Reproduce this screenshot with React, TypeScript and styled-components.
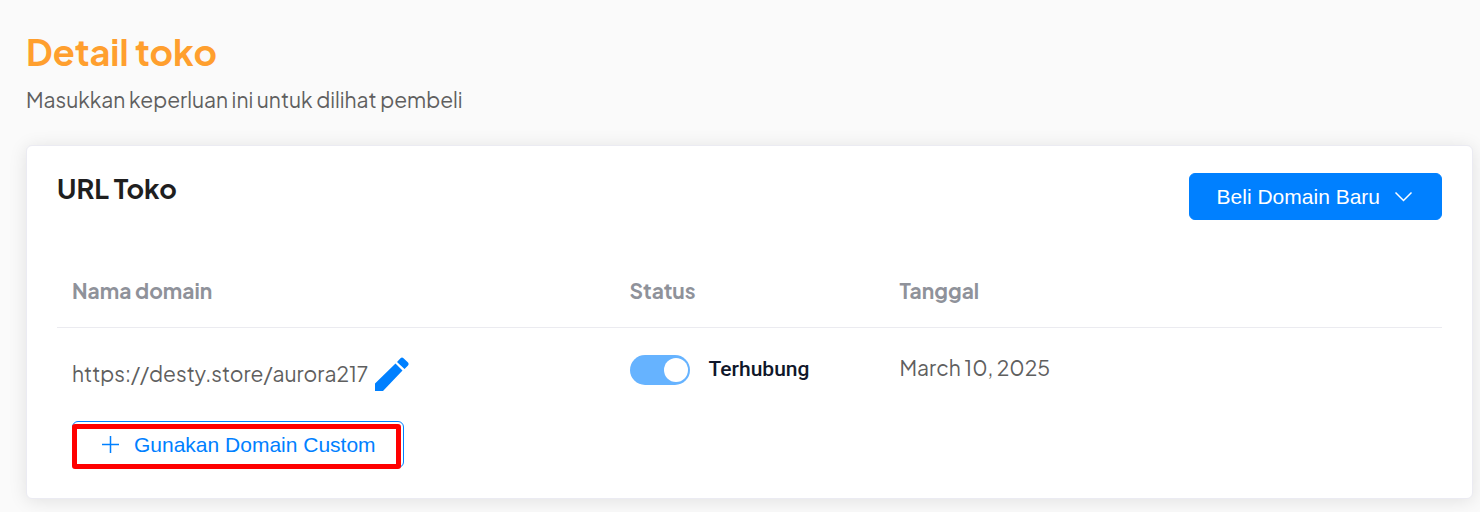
import React from "react";
import styled, { createGlobalStyle } from "styled-components";

const GlobalStyle = createGlobalStyle`
  *, *::before, *::after { box-sizing: border-box; }
  body {
    margin: 0;
    background: #fafafa;
    color: #5f5f5f;
    font-family: "Plus Jakarta Sans", Inter, sans-serif;
    font-size: 21px;
    line-height: 30px;
  }
`;

const Page = styled.main`
  padding: 28px 7px 13px 26px;
`;

const Title = styled.h1`
  margin: 0;
  color: #ff9f2e;
  font-size: 36px;
  font-weight: 700;
  line-height: 48px;
`;

const Subtitle = styled.p`
  margin: 9px 0 30px;
`;

const Card = styled.section`
  padding: 27px 30px 30px;
  background: #fff;
  border: 1px solid #ebebf2;
  border-radius: 6px;
  box-shadow: 0 2px 18px rgba(0, 0, 0, 0.1);
`;

const CardHeader = styled.header`
  display: flex;
  align-items: flex-start;
  justify-content: space-between;
`;

const CardTitle = styled.h2`
  margin: 0;
  color: #1f1f1f;
  font-size: 27px;
  font-weight: 700;
`;

const Button = styled.button<{ $outlined?: boolean }>`
  display: inline-flex;
  align-items: center;
  gap: 14px;
  height: 47px;
  padding: 0 27px;
  border: 1px solid #0080ff;
  border-radius: 6px;
  background: ${(p) => (p.$outlined ? "#fff" : "#0080ff")};
  color: ${(p) => (p.$outlined ? "#0080ff" : "#fff")};
  font: 21px/32px Arial, "Liberation Sans", sans-serif;
  white-space: nowrap;
  cursor: pointer;
`;

const DomainTable = styled.table`
  width: 100%;
  margin-top: 36px;
  table-layout: fixed;
  border-collapse: collapse;
`;

const StatusColumn = styled.col`
  width: 270px;
`;

const HeadCell = styled.th`
  padding: 20px 15px 21px;
  border-bottom: 1px solid #ebebf0;
  color: #8f929a;
  font-weight: 700;
  text-align: left;
`;

const Cell = styled.td`
  padding: 25px 15px 0;
  vertical-align: top;
`;

const DomainLine = styled.div`
  display: flex;
  align-items: center;
  gap: 7px;
  margin: 3px 0 29px;
  height: 36px;
`;

const EditButton = styled.button`
  display: flex;
  padding: 0;
  border: 0;
  background: none;
  color: #0080ff;
  cursor: pointer;
`;

const Highlighted = styled.div`
  position: relative;
  display: flex;
  width: max-content;

  &::after {
    content: "";
    position: absolute;
    inset: 3px 3px -1px 0;
    border: 5px solid #f00;
    border-radius: 3px;
    pointer-events: none;
  }
`;

const StatusLabel = styled.label`
  display: flex;
  align-items: center;
  gap: 19px;
  color: #10172a;
  font-family: Roboto, sans-serif;
  font-weight: 500;
  line-height: 32px;
`;

const Toggle = styled.input`
  appearance: none;
  display: flex;
  align-items: center;
  width: 60px;
  height: 30px;
  margin: 2px 0 0;
  padding: 0 2px;
  border-radius: 15px;
  background: #b8bcc4;

  &::before {
    content: "";
    width: 24px;
    height: 24px;
    border-radius: 50%;
    background: #fff;
  }

  &:checked {
    justify-content: flex-end;
    background: #66b3ff;
  }
`;

const ChevronIcon = () => (
  <svg width="20" height="20" viewBox="0 0 20 20" fill="none" stroke="currentColor" strokeWidth="1.5" aria-hidden="true">
    <path d="M1.5 5.5 9.5 13.5 17.5 5.5" />
  </svg>
);

const PlusIcon = () => (
  <svg width="20" height="20" viewBox="0 0 20 20" fill="none" stroke="currentColor" strokeWidth="1.5" aria-hidden="true">
    <path d="M2 9.5h17M10.5 1v17" />
  </svg>
);

const PencilIcon = () => (
  <svg width="34" height="34" viewBox="0 0 34 34" fill="currentColor" aria-hidden="true">
    <path d="M0 26.5 20.5 6.5 27.5 13.5 8 34H0ZM22 5 25.5 1.2Q27 0 28.5 1.2L33 5.5Q34.2 7 33 8.5L29.5 12Z" />
  </svg>
);

export default function App() {
  return (
    <>
      <GlobalStyle />
      <Page>
        <Title>Detail toko</Title>
        <Subtitle>Masukkan keperluan ini untuk dilihat pembeli</Subtitle>
        <Card>
          <CardHeader>
            <CardTitle>URL Toko</CardTitle>
            <Button type="button">
              Beli Domain Baru
              <ChevronIcon />
            </Button>
          </CardHeader>
          <DomainTable>
            <colgroup>
              <col />
              <StatusColumn />
              <col />
            </colgroup>
            <thead>
              <tr>
                <HeadCell scope="col">Nama domain</HeadCell>
                <HeadCell scope="col">Status</HeadCell>
                <HeadCell scope="col">Tanggal</HeadCell>
              </tr>
            </thead>
            <tbody>
              <tr>
                <Cell>
                  <DomainLine>
                    <span>https://desty.store/aurora217</span>
                    <EditButton type="button" aria-label="Ubah domain">
                      <PencilIcon />
                    </EditButton>
                  </DomainLine>
                  <Highlighted>
                    <Button type="button" $outlined>
                      <PlusIcon />
                      Gunakan Domain Custom
                    </Button>
                  </Highlighted>
                </Cell>
                <Cell>
                  <StatusLabel>
                    <Toggle type="checkbox" role="switch" defaultChecked />
                    Terhubung
                  </StatusLabel>
                </Cell>
                <Cell>March 10, 2025</Cell>
              </tr>
            </tbody>
          </DomainTable>
        </Card>
      </Page>
    </>
  );
}
